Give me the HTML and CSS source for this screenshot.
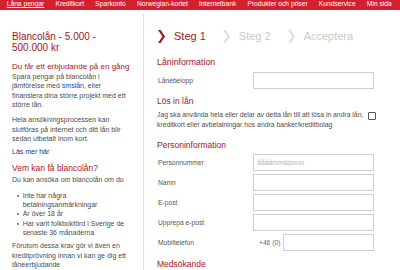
FILE: index.html
```html
<!DOCTYPE html>
<html lang="sv">
<head>
<meta charset="utf-8">
<title>Blancolån</title>
<link rel="stylesheet" href="styles.css">
</head>
<body>
<nav class="nav">
  <a class="nav-item active">Låna pengar</a>
  <a class="nav-item">Kreditkort</a>
  <a class="nav-item">Sparkonto</a>
  <a class="nav-item">Norwegian-kortet</a>
  <a class="nav-item">Internetbank</a>
  <a class="nav-item">Produkter och priser</a>
  <a class="nav-item">Kundservice</a>
  <a class="nav-item">Min sida</a>
</nav>
<div class="main">
  <aside class="left">
    <h1 class="title">Blancolån - 5.000 - 500.000 kr</h1>
    <h2 class="sub">Du får ett erbjudande på en gång</h2>
    <p class="p p1">Spara pengar på blancolån i jämförelse med <a class="link">smslån</a>, eller finansiera dina större projekt med ett större lån.</p>
    <p class="p p2">Hela ansökningsprocessen kan slutföras på internet och ditt lån blir sedan utbetalt inom kort.</p>
    <p class="p more"><a class="more-link">Läs mer här</a></p>
    <h2 class="sub sub2">Vem kan få blancolån?</h2>
    <p class="p p3">Du kan ansöka om blancolån om du</p>
    <ul class="list">
      <li>Inte har några betalningsanmärkningar</li>
      <li>Är över 18 år</li>
      <li>Har varit folkbokförd i Sverige de senaste 36 månaderna</li>
    </ul>
    <p class="p p4">Förutom dessa krav gör vi även en kreditprövning innan vi kan ge dig ett låneerbjudande</p>
  </aside>
  <section class="right">
    <div class="steps">
      <div class="step active">
        <svg class="chev" width="7" height="13" viewBox="0 0 7 13"><polygon points="0,0 2.6,0 7,6.5 2.6,13 0,13 4.4,6.5"/></svg>
        <span>Steg 1</span>
      </div>
      <div class="step">
        <svg class="chev" width="7" height="13" viewBox="0 0 7 13"><polygon points="0,0 2.6,0 7,6.5 2.6,13 0,13 4.4,6.5"/></svg>
        <span>Steg 2</span>
      </div>
      <div class="step">
        <svg class="chev" width="7" height="13" viewBox="0 0 7 13"><polygon points="0,0 2.6,0 7,6.5 2.6,13 0,13 4.4,6.5"/></svg>
        <span>Acceptera</span>
      </div>
    </div>

    <h3 class="sec sec-first">Låninformation</h3>
    <div class="row row-first">
      <span class="label">Lånebelopp</span>
      <span class="input"></span>
    </div>

    <h3 class="sec sec-loan">Lös in lån</h3>
    <div class="check">
      <p class="check-text">Jag ska använda hela eller delar av detta lån till att lösa in andra lån, kreditkort eller avbetalningar hos andra banker/kreditbolag</p>
      <span class="box"></span>
    </div>

    <h3 class="sec sec-person">Personinformation</h3>
    <div class="row row-first2">
      <span class="label">Personnummer</span>
      <span class="input placeholder">ååååmmddxxxx</span>
    </div>
    <div class="row">
      <span class="label">Namn</span>
      <span class="input"></span>
    </div>
    <div class="row">
      <span class="label">E-post</span>
      <span class="input"></span>
    </div>
    <div class="row">
      <span class="label">Upprepa e-post</span>
      <span class="input"></span>
    </div>
    <div class="row">
      <span class="label">Mobiltelefon</span>
      <span class="prefix">+46 (0)</span>
      <span class="input input-phone"></span>
    </div>

    <h3 class="sec sec-co">Medsökande</h3>
  </section>
</div>
</body>
</html>
```

FILE: styles.css
```css
html, body {
  margin: 0;
  padding: 0;
}

body {
  width: 400px;
  height: 270px;
  overflow: hidden;
  background: #ffffff;
  font-family: "Liberation Sans", Arial, sans-serif;
  color: #4d4d4d;
}

/* top navigation */
.nav {
  display: flex;
  gap: 11.2px;
  height: 10px;
  padding-left: 6.7px;
  background: #d3202e;
  font-size: 6.7px;
  line-height: 7px;
}

.nav-item {
  color: #ffffff;
  text-decoration: none;
  white-space: nowrap;
}

.nav-item.active {
  text-decoration: underline;
}

/* layout */
.main {
  display: flex;
  align-items: stretch;
  height: 260px;
  overflow: hidden;
}

.left {
  flex: none;
  width: 119px;
  padding-left: 12px;
  padding-top: 21.2px;
}

.title {
  margin: 0;
  font-size: 10px;
  line-height: 11px;
  font-weight: normal;
  color: #a5131d;
}

.sub {
  margin: 8.5px 0 0;
  font-size: 8px;
  line-height: 10px;
  font-weight: normal;
  color: #b0141f;
}

.p {
  margin: 0;
  font-size: 7px;
  line-height: 9.3px;
  color: #4d4d4d;
}

.p1 { margin-top: 0.3px; }
.p2 { margin-top: 6.1px; }
.more { margin-top: 3.8px; }

.link {
  color: #2040d0;
}

.more-link {
  color: #1c2f86;
}

.sub2 {
  margin-top: 7px;
  font-size: 8.5px;
}

.p3 { margin-top: 2px; }

.list {
  margin: 6.7px 0 0;
  padding: 0 0 0 10.7px;
  list-style: none;
  font-size: 7px;
  line-height: 9.1px;
  color: #4d4d4d;
}

.list li {
  position: relative;
}

.list li::before {
  content: "";
  position: absolute;
  left: -5.6px;
  top: 4px;
  width: 2px;
  height: 2px;
  border-radius: 50%;
  background: #666666;
}

.p4 {
  margin-top: 4.5px;
  line-height: 9.6px;
}

/* right column */
.right {
  flex: 1;
  margin-left: 12px;
  margin-top: 4px;
  border-left: 1px solid #dedede;
  padding-left: 13px;
  padding-top: 15px;
}

.steps {
  display: flex;
  align-items: center;
  gap: 17px;
  height: 14px;
  padding-left: 1px;
}

.step {
  display: flex;
  align-items: center;
  gap: 9px;
  font-size: 11px;
  line-height: 14px;
  color: #cacaca;
}

.step .chev {
  fill: #dddddd;
}

.step.active {
  color: #a5131d;
}

.step.active .chev {
  fill: #a0121c;
}

.sec {
  margin: 0;
  font-size: 8.5px;
  line-height: 11px;
  font-weight: normal;
  color: #a5131d;
}

.sec-first { margin-top: 14.2px; font-size: 8.8px; }
.sec-loan { margin-top: 7.2px; }
.sec-person { margin-top: 11.5px; }
.sec-co { margin-top: 8.5px; }

.row {
  display: flex;
  align-items: center;
  height: 17px;
  margin-top: 3px;
}

.row-first { margin-top: 3.8px; }
.row-first2 { margin-top: 2.5px; }

.label {
  flex: none;
  width: 96px;
  padding-left: 1px;
  box-sizing: border-box;
  font-size: 6.7px;
  color: #555555;
}

.input {
  flex: none;
  display: flex;
  align-items: center;
  box-sizing: border-box;
  width: 121px;
  height: 17px;
  padding-left: 3.5px;
  border: 1px solid #cfcfcf;
  background: #ffffff;
  font-size: 6.7px;
}

.placeholder {
  color: #b5b5b5;
}

.prefix {
  flex: none;
  width: 23.7px;
  margin-left: 6px;
  font-size: 6.7px;
  color: #666666;
}

.input-phone {
  width: 91.3px;
}

.check {
  display: flex;
  align-items: flex-start;
  margin-top: 3.15px;
}

.check-text {
  flex: none;
  width: 209px;
  margin: 0;
  font-size: 6.8px;
  line-height: 9.3px;
  color: #4d4d4d;
}

.box {
  flex: none;
  width: 8px;
  height: 8px;
  margin-left: 1.5px;
  margin-top: 1.7px;
  box-sizing: border-box;
  border: 1px solid #555555;
  border-radius: 1px;
}
```
